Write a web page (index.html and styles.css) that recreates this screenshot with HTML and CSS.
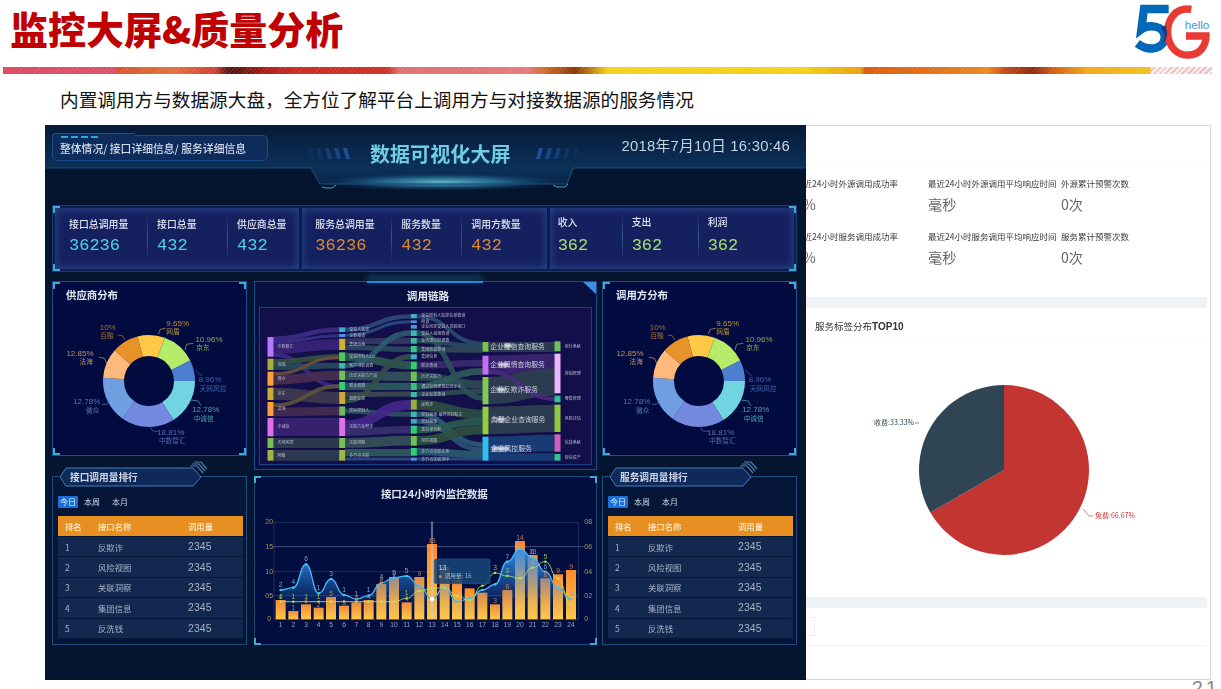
FILE: index.html
```html
<!DOCTYPE html>
<html lang="zh">
<head>
<meta charset="utf-8">
<title>监控大屏&amp;质量分析</title>
<link rel="stylesheet" href="styles.css">
</head>
<body>
<header class="slide-head">
  <h1 class="slide-title">监控大屏&amp;质量分析</h1>
  <svg class="logo" viewBox="400 0 240 180" width="80" height="60" aria-label="5G hello">
    <path d="M510 27H436L428 88C450 72 496 76 498 110C500 142 455 160 416 130" fill="none" stroke="#0068b7" stroke-width="25"/>
    <path d="M578 28C530 20 505 60 507 100C510 145 540 168 570 165C605 165 622 135 622 108H562" fill="none" stroke="#ea3a34" stroke-width="22"/>
    <path d="M486 84C496 92 499 104 497 118C495 128 490 134 484 138C492 132 505 122 505 100C505 94 503 84 500 76Z" fill="#12387f"/>
    <text x="558" y="86" class="logo-text">hello</text>
  </svg>
</header>
<div class="ribbon"></div>
<p class="subtitle">内置调用方与数据源大盘，全方位了解平台上调用方与对接数据源的服务情况</p>

<main class="stage">
  <section class="dash">
    <div class="dash-head">
      <svg class="head-deco" viewBox="0 0 761 80" width="761" height="80">
        <defs>
          <linearGradient id="headBand" x1="0" y1="0" x2="0" y2="1">
            <stop offset="0" stop-color="#061a38"/><stop offset="1" stop-color="#0b3158"/>
          </linearGradient>
          <linearGradient id="trap" x1="0" y1="0" x2="0" y2="1">
            <stop offset="0" stop-color="#0b3158"/><stop offset="1" stop-color="#082347"/>
          </linearGradient>
          <radialGradient id="headGlow">
            <stop offset="0" stop-color="#5fb6c9"/><stop offset=".5" stop-color="#2a7aa0" stop-opacity=".7"/><stop offset="1" stop-color="#0e3a66" stop-opacity="0"/>
          </radialGradient>
        </defs>
        <rect width="761" height="43" fill="url(#headBand)"/>
        <path d="M266 43H528L522 59H275Z" fill="url(#trap)"/>
        <ellipse cx="397" cy="57" rx="125" ry="9" fill="url(#headGlow)"/>
        <path d="M0 43H266L275 59H522L528 43H761" fill="none" stroke="#1a4a7d" stroke-width="1.2"/>
        <path d="M277 62L281 63H287L291 60" fill="none" stroke="#3fa5c8"/>
        <path d="M508 60L512 62H520L523 59" fill="none" stroke="#3fa5c8"/>
        <g fill="#1f4f9c">
          <path d="M262 24l3-1h3l2 11h-5z" opacity=".15"/><path d="M271 23h4l3 11h-4z" opacity=".3"/><path d="M280 23h4l3 11h-4z" opacity=".55"/><path d="M289 23h4l3 11h-4z" opacity=".75"/><path d="M298 23h4l3 11h-4z"/>
          <path d="M491 34l3-11h4l-3 11z"/><path d="M500 34l3-11h4l-3 11z" opacity=".75"/><path d="M509 34l3-11h4l-3 11z" opacity=".55"/><path d="M518 34l3-11h4l-3 11z" opacity=".3"/><path d="M527 34l3-11h4l-3 11z" opacity=".15"/>
        </g>
      </svg>
      <div class="crumb"><span class="crumb-dash"></span>整体情况/ 接口详细信息/ 服务详细信息</div>
      <div class="dash-title">数据可视化大屏</div>
      <div class="dash-date">2018年7月10日 16:30:46</div>
    </div>

    <div class="kpi-frame frame">
      <div class="kpi kpi-a">
        <div class="kpi-item"><span class="kpi-label">接口总调用量</span><span class="kpi-num cyan">36236</span></div>
        <div class="kpi-item"><span class="kpi-label">接口总量</span><span class="kpi-num cyan">432</span></div>
        <div class="kpi-item"><span class="kpi-label">供应商总量</span><span class="kpi-num cyan">432</span></div>
      </div>
      <div class="kpi kpi-b">
        <div class="kpi-item"><span class="kpi-label">服务总调用量</span><span class="kpi-num orange">36236</span></div>
        <div class="kpi-item"><span class="kpi-label">服务数量</span><span class="kpi-num orange">432</span></div>
        <div class="kpi-item"><span class="kpi-label">调用方数量</span><span class="kpi-num orange">432</span></div>
      </div>
      <div class="kpi kpi-c">
        <div class="kpi-item"><span class="kpi-label">收入</span><span class="kpi-num green">362</span></div>
        <div class="kpi-item"><span class="kpi-label">支出</span><span class="kpi-num green">362</span></div>
        <div class="kpi-item"><span class="kpi-label">利润</span><span class="kpi-num green">362</span></div>
      </div>
    </div>

    <div class="board">
      <div class="col col-left">
        <article class="panel pie-panel frame">
          <h2 class="panel-title">供应商分布</h2>
          <svg class="donut" viewBox="0 24 195 151" width="195" height="151">
            <g fill="none" stroke-width="21" transform="rotate(-90 97 100)">
              <circle cx="97" cy="100" r="35.5" pathLength="360" stroke="#ffc845" stroke-dasharray="34.6 325.4" stroke-dashoffset="14.6"/>
              <circle cx="97" cy="100" r="35.5" pathLength="360" stroke="#b4ec6a" stroke-dasharray="43.6 316.4" stroke-dashoffset="-20"/>
              <circle cx="97" cy="100" r="35.5" pathLength="360" stroke="#4c7fcf" stroke-dasharray="26.4 333.6" stroke-dashoffset="-63.6"/>
              <circle cx="97" cy="100" r="35.5" pathLength="360" stroke="#70d5e0" stroke-dasharray="58 302" stroke-dashoffset="-90"/>
              <circle cx="97" cy="100" r="35.5" pathLength="360" stroke="#7489e0" stroke-dasharray="67 293" stroke-dashoffset="-148"/>
              <circle cx="97" cy="100" r="35.5" pathLength="360" stroke="#6f9fe0" stroke-dasharray="59 301" stroke-dashoffset="-215"/>
              <circle cx="97" cy="100" r="35.5" pathLength="360" stroke="#ffb97a" stroke-dasharray="38 322" stroke-dashoffset="-274"/>
              <circle cx="97" cy="100" r="35.5" pathLength="360" stroke="#e8922a" stroke-dasharray="33.4 326.6" stroke-dashoffset="-312"/>
            </g>
            <g fill="none" stroke-width=".7">
              <polyline stroke="#c9a23e" points="106.3,53.3 108.3,48.3 113.7,47.3"/>
              <polyline stroke="#8bb656" points="133,69 134.7,63.3 141.3,62.3"/>
              <polyline stroke="#3f63a5" points="143.7,89 148,94 150,94"/>
              <polyline stroke="#5aa8b2" points="138.7,119 146.3,120 149,124.7"/>
              <polyline stroke="#5d6db5" points="98,145 100.3,149.7 106.3,150.7"/>
              <polyline stroke="#577fb5" points="58,119 54.7,123.3 49.7,123.3"/>
              <polyline stroke="#c99560" points="54.7,82.3 52.3,77.3 47,76.3"/>
              <polyline stroke="#b57420" points="73,59 70.3,54.7 65.7,54"/>
            </g>
            <g class="donut-text">
              <text x="125.7" y="44.7" fill="#b89238">9.65%</text><text x="121" y="52.7" fill="#b89238">网盾</text>
              <text x="157" y="61" fill="#84ab52">10.96%</text><text x="151" y="69" fill="#84ab52">京东</text>
              <text x="158" y="100.7" fill="#3f63a5">8.96%</text><text x="161" y="109.7" fill="#3f63a5">天网风控</text>
              <text x="153.7" y="131.3" fill="#54a0aa">12.78%</text><text x="151.7" y="139.7" fill="#54a0aa">中诚信</text>
              <text x="118.7" y="154" fill="#5a69ae">18.81%</text><text x="120.3" y="162.3" fill="#5a69ae">中数智汇</text>
              <text x="34.7" y="123.3" fill="#5278ac">12.78%</text><text x="40.7" y="131.7" fill="#5278ac">微众</text>
              <text x="28" y="75.3" fill="#c08f5e">12.85%</text><text x="34.3" y="83.3" fill="#c08f5e">法海</text>
              <text x="55.7" y="48.7" fill="#ad7020">10%</text><text x="55" y="56.7" fill="#ad7020">百融</text>
            </g>
          </svg>
        </article>
        <article class="panel rank-panel">
          <div class="rank-tab">
            <svg class="tab-shape" viewBox="0 0 150 26" width="150" height="26">
              <path d="M130 5H137L143 12M132 3H139L145 10M134 1H141L147 8" fill="none" stroke="#4f7fb0" stroke-width="1.2"/>
              <path d="M6 7H133L141 16L133 25H6L0 16Z" fill="#0f2a5a" stroke="#3f7fb8" stroke-width="1"/>
            </svg>
            <span class="tab-text">接口调用量排行</span>
          </div>
          <div class="range-tabs"><span class="range-tab is-active">今日</span><span class="range-tab">本周</span><span class="range-tab">本月</span></div>
          <div class="rank-table">
            <div class="rank-row rank-header"><span>排名</span><span>接口名称</span><span>调用量</span></div>
            <div class="rank-row"><span>1</span><span>反欺诈</span><span class="rank-val">2345</span></div>
            <div class="rank-row"><span>2</span><span>风险视图</span><span class="rank-val">2345</span></div>
            <div class="rank-row"><span>3</span><span>关联洞察</span><span class="rank-val">2345</span></div>
            <div class="rank-row"><span>4</span><span>集团信息</span><span class="rank-val">2345</span></div>
            <div class="rank-row"><span>5</span><span>反洗钱</span><span class="rank-val">2345</span></div>
          </div>
        </article>
      </div>

      <div class="col col-center">
        <article class="panel link-panel">
          <span class="link-glow"></span>
          <span class="link-corner"></span>
          <h2 class="link-title">调用链路</h2>
          <svg class="sankey" viewBox="30 100 992 468" width="331" height="156">
            <defs><filter id="smudge"><feGaussianBlur stdDeviation="3"/></filter></defs>
            <rect x="30" y="100" width="992" height="468" fill="#130f4b"/>
            <g class="flows">
              <path stroke="#3d2b85" stroke-width="14" d="M70 192C168 192 168 165 267 165"/>
              <path stroke="#38308a" stroke-width="9" d="M70 203C168 203 168 183 267 183"/>
              <path stroke="#3a2378" stroke-width="32" d="M70 222C168 222 168 209 267 209"/>
              <path stroke="#3b2a88" stroke-width="12" d="M70 240C168 240 168 335 267 335"/>
              <path stroke="#35503f" stroke-width="16" d="M70 262C168 262 168 246 267 246"/>
              <path stroke="#284a5a" stroke-width="17" d="M70 277C168 277 168 273 267 273"/>
              <path stroke="#6a4e3a" stroke-width="10" d="M70 298C168 298 168 248 267 248"/>
              <path stroke="#4a2e50" stroke-width="28" d="M70 316C168 316 168 302 267 302"/>
              <path stroke="#3f3850" stroke-width="36" d="M70 357C168 357 168 370 267 370"/>
              <path stroke="#5e5138" stroke-width="12" d="M70 392C168 392 168 335 267 335"/>
              <path stroke="#452c50" stroke-width="26" d="M70 412C168 412 168 409 267 409"/>
              <path stroke="#3b2270" stroke-width="54" d="M70 457H267"/>
              <path stroke="#2e3c50" stroke-width="30" d="M70 505H267"/>
              <path stroke="#2e3c50" stroke-width="32" d="M70 542H267"/>

              <path stroke="#2c4a7a" stroke-width="13" d="M285 165C383 165 383 125 482 125"/>
              <path stroke="#2a4a80" stroke-width="9" d="M285 182C383 182 383 141 482 141"/>
              <path stroke="#343a62" stroke-width="18" d="M285 200C383 200 383 198 482 198"/>
              <path stroke="#2a4a60" stroke-width="16" d="M285 218C383 218 383 224 482 224"/>
              <path stroke="#2c5a55" stroke-width="24" d="M285 246C383 246 383 272 482 272"/>
              <path stroke="#2c5a70" stroke-width="16" d="M285 273C383 273 383 175 482 175"/>
              <path stroke="#34505a" stroke-width="28" d="M285 302C383 302 383 305 482 305"/>
              <path stroke="#2c5a60" stroke-width="22" d="M285 335H482"/>
              <path stroke="#3a4a50" stroke-width="15" d="M285 360C383 360 383 358 482 358"/>
              <path stroke="#344e4a" stroke-width="16" d="M285 378C383 378 383 246 482 246"/>
              <path stroke="#2d5060" stroke-width="15" d="M285 409C383 409 383 419 482 419"/>
              <path stroke="#43268a" stroke-width="30" d="M285 452C383 452 383 390 482 390"/>
              <path stroke="#3a3070" stroke-width="22" d="M285 472C383 472 383 465 482 465"/>
              <path stroke="#34505a" stroke-width="29" d="M285 505C383 505 383 498 482 498"/>
              <path stroke="#305a5a" stroke-width="22" d="M285 534H482"/>
              <path stroke="#2a4a80" stroke-width="9" d="M285 553H482"/>

              <path stroke="#2c4a70" stroke-width="12" d="M500 125C598 125 598 207 697 207"/>
              <path stroke="#2a4a60" stroke-width="14" d="M500 198C598 198 598 216 697 216"/>
              <path stroke="#2e4a52" stroke-width="17" d="M500 224C598 224 598 226 697 226"/>
              <path stroke="#3a2a70" stroke-width="20" d="M500 272C598 272 598 265 697 265"/>
              <path stroke="#2c4a55" stroke-width="25" d="M500 305C598 305 598 330 697 330"/>
              <path stroke="#2c5a5a" stroke-width="20" d="M500 335C598 335 598 290 697 290"/>
              <path stroke="#2e4a52" stroke-width="15" d="M500 358C598 358 598 350 697 350"/>
              <path stroke="#2e4c40" stroke-width="30" d="M500 390C598 390 598 420 697 420"/>
              <path stroke="#2c5a70" stroke-width="15" d="M500 419C598 419 598 510 697 510"/>
              <path stroke="#2c5470" stroke-width="14" d="M500 440C598 440 598 525 697 525"/>
              <path stroke="#2a5a50" stroke-width="22" d="M500 465C598 465 598 440 697 440"/>
              <path stroke="#2e5040" stroke-width="28" d="M500 498C598 498 598 465 697 465"/>
              <path stroke="#2a5a70" stroke-width="22" d="M500 531C598 531 598 540 697 540"/>
              <path stroke="#2a4a80" stroke-width="9" d="M500 553H697"/>
              <path stroke="#2a5058" stroke-width="16" d="M500 175C598 175 598 370 697 370"/>

              <path stroke="#2d3d50" stroke-width="30" d="M715 217H913"/>
              <path stroke="#3a2470" stroke-width="57" d="M715 271C814 271 814 266 913 266"/>
              <path stroke="#2e4050" stroke-width="82" d="M715 348C814 348 814 322 913 322"/>
              <path stroke="#4a2a80" stroke-width="12" d="M715 292C814 292 814 373 913 373"/>
              <path stroke="#2e4050" stroke-width="82" d="M715 437C814 437 814 431 913 431"/>
              <path stroke="#1a3f78" stroke-width="50" d="M715 511C814 511 814 505 913 505"/>
              <path stroke="#1a3f78" stroke-width="22" d="M715 547H913"/>
            </g>
            <g class="nodes">
              <rect x="52" y="187" height="59" fill="#b57aff"/><rect x="52" y="252" height="34" fill="#aab035"/><rect x="52" y="291" height="42" fill="#ff9f3a"/><rect x="52" y="339" height="37" fill="#ccab30"/><rect x="52" y="382" height="42" fill="#ff9f3a"/><rect x="52" y="430" height="55" fill="#e070e8"/><rect x="52" y="490" height="30" fill="#7ac050"/><rect x="52" y="526" height="32" fill="#a0b840"/>
              <rect x="267" y="158" height="14" fill="#3eb0c8"/><rect x="267" y="178" height="9" fill="#4e90e8"/><rect x="267" y="192" height="34" fill="#ccb030"/><rect x="267" y="233" height="26" fill="#50c860"/><rect x="267" y="265" height="17" fill="#40b8a8"/><rect x="267" y="288" height="28" fill="#70c058"/><rect x="267" y="322" height="24" fill="#30d070"/><rect x="267" y="352" height="36" fill="#d0a830"/><rect x="267" y="395" height="28" fill="#70b858"/><rect x="267" y="430" height="54" fill="#e070e8"/><rect x="267" y="490" height="30" fill="#7ac050"/><rect x="267" y="526" height="32" fill="#a0b840"/>
              <rect x="482" y="118" height="13" fill="#40b0c0"/><rect x="482" y="137" height="8" fill="#5090e0"/><rect x="482" y="151" height="11" fill="#4a9ad8"/><rect x="482" y="167" height="17" fill="#40b8a8"/><rect x="482" y="190" height="17" fill="#40b8a0"/><rect x="482" y="214" height="19" fill="#38c888"/><rect x="482" y="239" height="15" fill="#3cb0c0"/><rect x="482" y="261" height="23" fill="#30d070"/><rect x="482" y="291" height="28" fill="#70c058"/><rect x="482" y="325" height="21" fill="#38c080"/><rect x="482" y="352" height="15" fill="#40b8a8"/><rect x="482" y="375" height="30" fill="#90b040"/><rect x="482" y="411" height="16" fill="#38b8b0"/><rect x="482" y="433" height="14" fill="#40a8c0"/><rect x="482" y="453" height="24" fill="#30d070"/><rect x="482" y="484" height="29" fill="#70c058"/><rect x="482" y="520" height="23" fill="#30d070"/><rect x="482" y="549" height="9" fill="#4a90e8"/>
              <rect x="697" y="202" height="29" fill="#80c050"/><rect x="697" y="243" height="57" fill="#c070f0"/><rect x="697" y="307" height="82" fill="#80cc50"/><rect x="697" y="396" height="83" fill="#90d040"/><rect x="697" y="486" height="72" fill="#30c0f0"/>
              <rect x="913" y="200" height="30" fill="#70c060"/><rect x="913" y="237" height="119" fill="#e8b8f8"/><rect x="913" y="363" height="20" fill="#30c090"/><rect x="913" y="390" height="82" fill="#90c840"/><rect x="913" y="479" height="52" fill="#d060c0"/><rect x="913" y="538" height="20" fill="#30c090"/>
            </g>
            <g class="sk-small">
              <text x="82" y="220">中数智汇</text><text x="82" y="273">百融</text><text x="82" y="316">微众</text><text x="82" y="361">京东</text><text x="82" y="406">法海</text><text x="82" y="461">中诚信</text><text x="82" y="509">天网风控</text><text x="82" y="546">网盾</text>
              <text x="297" y="169">受益人监控</text><text x="297" y="187">企数渠道</text><text x="297" y="213">集团派系</text><text x="297" y="250">受益所有人2.0</text><text x="297" y="278">客户书职调查</text><text x="297" y="306">历史关联方产品</text><text x="297" y="338">新企调查</text><text x="297" y="375">智能标签</text><text x="297" y="413">实际控制人</text><text x="297" y="461">关联方反欺诈</text><text x="297" y="509">关联洞察</text><text x="297" y="546">多节点关联</text>
              <text x="513" y="128">受益所有人监控名单查询</text><text x="513" y="145">商道</text><text x="513" y="161">企业风控受益人识别接口</text><text x="513" y="180">受益人销规查询</text><text x="513" y="203">反洗钱尽职调查</text><text x="513" y="228">集团族谱查询</text><text x="513" y="250">集团信息</text><text x="513" y="276">新企查询</text><text x="513" y="309">历史关联方</text><text x="513" y="339">通过信管理查职链企业</text><text x="513" y="363">企业标签查询</text><text x="513" y="393">反欺诈</text><text x="513" y="423">控制路径-最终控制股东</text><text x="513" y="444">控制路径</text><text x="513" y="469">黑名单判断</text><text x="513" y="502">风险视图</text><text x="513" y="535">多节点关联关系</text><text x="513" y="558">多节点关联排序</text>
              <text x="944" y="219">审计系统</text><text x="944" y="300">营销管理</text><text x="944" y="377">零售管理</text><text x="944" y="435">风险评估</text><text x="944" y="509">信贷系统</text><text x="944" y="552">授信资产</text>
            </g>
            <g class="sk-big">
              <text x="720" y="223">企业授信查询服务</text><text x="720" y="277">企业舆情查询服务</text><text x="720" y="351">企业反欺诈服务</text><text x="722" y="441">典型企业查询服务</text><text x="722" y="528">企业风控服务</text>
            </g>
            <g fill="#fff" filter="url(#smudge)" opacity=".75">
              <rect x="762" y="207" width="22" height="12"/><rect x="745" y="264" width="30" height="12"/><rect x="740" y="339" width="26" height="12"/><rect x="740" y="430" width="26" height="10"/><rect x="725" y="516" width="50" height="12"/>
            </g>
          </svg>
        </article>
        <article class="panel chart-panel frame">
          <svg class="bars" viewBox="12 3 1029 507" width="343" height="169">
            <defs>
              <linearGradient id="barFill" x1="0" y1="0" x2="0" y2="1"><stop offset="0" stop-color="#ff8a2a"/><stop offset="1" stop-color="#ffc94a"/></linearGradient>
              <linearGradient id="areaFill" x1="0" y1="0" x2="0" y2="1"><stop offset="0" stop-color="#2f8ff0" stop-opacity=".95"/><stop offset=".75" stop-color="#2f8ff0" stop-opacity=".1"/><stop offset="1" stop-color="#2f8ff0" stop-opacity="0"/></linearGradient>
              <marker id="dotBlue" markerUnits="userSpaceOnUse" markerWidth="12" markerHeight="12" refX="6" refY="6"><circle cx="6" cy="6" r="4" fill="#46c0f8"/></marker>
              <marker id="dotGreen" markerUnits="userSpaceOnUse" markerWidth="12" markerHeight="12" refX="6" refY="6"><circle cx="6" cy="6" r="3.5" fill="#b4ec50"/></marker>
            </defs>
            <text x="553" y="70" class="chart-title">接口24小时内监控数据</text>
            <g stroke="#33406f" stroke-width="2" fill="none">
              <path d="M72 142H985M72 290H985M72 362H985M72 433H985M72 142V433M985 142V433"/>
            </g>
            <path d="M72 215H1000" stroke="#5a6a98" stroke-width="3" stroke-dasharray="3 1" fill="none"/>
            <g fill="url(#barFill)">
              <rect x="77" y="375" width="30" height="58"/><rect x="115" y="408" width="30" height="25"/><rect x="153" y="388" width="30" height="45"/><rect x="191" y="398" width="30" height="35"/><rect x="228" y="366" width="30" height="67"/><rect x="267" y="392" width="30" height="41"/><rect x="304" y="382" width="30" height="51"/><rect x="341" y="375" width="30" height="58"/><rect x="379" y="327" width="30" height="106"/><rect x="417" y="306" width="30" height="127"/><rect x="455" y="382" width="30" height="51"/><rect x="493" y="306" width="30" height="127"/><rect x="531" y="207" width="30" height="226"/><rect x="569" y="276" width="30" height="157"/><rect x="606" y="315" width="30" height="118"/><rect x="644" y="340" width="30" height="93"/><rect x="682" y="353" width="30" height="80"/><rect x="720" y="388" width="30" height="45"/><rect x="757" y="345" width="30" height="88"/><rect x="795" y="198" width="30" height="235"/><rect x="833" y="240" width="30" height="193"/><rect x="871" y="310" width="30" height="123"/><rect x="909" y="298" width="30" height="135"/><rect x="948" y="285" width="30" height="148"/>
            </g>
            <path fill="url(#areaFill)" d="M92 345C111 345 111 338 130 338S149 268 168 268S187 355 206 355S224 312 243 312S263 360 282 360S300 372 319 372S337 362 356 362S375 324 394 324S413 308 432 308S451 303 470 303S489 332 508 332S527 372 546 372S565 335 584 335S602 380 621 380S640 370 659 370S678 345 697 345S716 328 735 328S753 260 772 260S791 222 810 222S829 248 848 248S867 290 886 290S905 338 924 338S944 372 963 372V433H92Z"/>
            <path class="line-blue" d="M92 345C111 345 111 338 130 338S149 268 168 268S187 355 206 355S224 312 243 312S263 360 282 360S300 372 319 372S337 362 356 362S375 324 394 324S413 308 432 308S451 303 470 303S489 332 508 332S527 372 546 372S565 335 584 335S602 380 621 380S640 370 659 370S678 345 697 345S716 328 735 328S753 260 772 260S791 222 810 222S829 248 848 248S867 290 886 290S905 338 924 338S944 372 963 372"/>
            <path class="line-green" d="M92 380H130H168H206H243H282H319H356H394H432C451 380 451 370 470 370S489 348 508 348S527 340 546 340S565 338 584 338S602 362 621 362S640 376 659 376S678 332 697 332S716 294 735 294S753 303 772 303S791 310 810 310S829 278 848 278S867 260 886 260S905 310 924 310S944 390 963 390"/>
            <path d="M546 140V433" stroke="#c9cfe0" stroke-width="3" fill="none"/>
            <circle cx="546" cy="372" r="7" fill="#fff"/>
            <g class="bar-vals">
              <text x="92" y="372">4</text><text x="130" y="405">1</text><text x="168" y="385">4</text><text x="206" y="395">2</text><text x="243" y="362">5</text><text x="282" y="389">3</text><text x="319" y="378">3</text><text x="356" y="372">4</text><text x="394" y="324">8</text><text x="432" y="302">9</text><text x="470" y="378">4</text><text x="508" y="302">9</text><text x="546" y="203">13</text><text x="621" y="312">9</text><text x="735" y="384">3</text><text x="772" y="341">6</text><text x="810" y="194">14</text><text x="848" y="236">13</text><text x="886" y="306">8</text><text x="924" y="294">9</text><text x="963" y="281">9</text>
            </g>
            <g class="line-vals">
              <text x="92" y="336">2</text><text x="130" y="326">4</text><text x="168" y="259">6</text><text x="206" y="346">1</text><text x="243" y="303">3</text><text x="282" y="350">1</text><text x="319" y="362">1</text><text x="356" y="352">1</text><text x="394" y="313">4</text><text x="432" y="299">5</text><text x="470" y="294">5</text><text x="508" y="323">4</text><text x="772" y="251">7</text><text x="810" y="214">8</text><text x="848" y="238">6</text><text x="886" y="281">6</text><text x="963" y="362">3</text>
            </g>
            <g class="green-vals">
              <text x="92" y="372">1</text><text x="130" y="372">1</text><text x="168" y="372">1</text><text x="206" y="372">1</text><text x="470" y="361">1</text><text x="735" y="286">3</text><text x="772" y="295">3</text><text x="810" y="302">2</text><text x="848" y="270">4</text><text x="886" y="252">5</text>
            </g>
            <g class="tooltip">
              <rect x="553" y="252" width="167" height="74" rx="6" fill="#174476" fill-opacity=".88" stroke="#225b92" stroke-width="2"/>
              <text x="566" y="284" class="tip-title">13</text>
              <circle cx="571" cy="305" r="4" fill="#ff8a2a"/>
              <text x="584" y="310" class="tip-text">调用量:</text>
              <text x="645" y="310" class="tip-text">16</text>
            </g>
            <g class="ax-left">
              <text x="46" y="148">20</text><text x="46" y="221">15</text><text x="46" y="296">10</text><text x="46" y="368">05</text><text x="52" y="439">0</text>
            </g>
            <g class="ax-right">
              <text x="1003" y="148">08</text><text x="1003" y="221">06</text><text x="1003" y="296">04</text><text x="1003" y="368">02</text><text x="1003" y="439">0</text>
            </g>
            <g class="ax-bottom">
              <text x="92" y="456">1</text><text x="130" y="456">2</text><text x="168" y="456">3</text><text x="206" y="456">4</text><text x="243" y="456">5</text><text x="282" y="456">6</text><text x="319" y="456">7</text><text x="356" y="456">8</text><text x="394" y="456">9</text><text x="432" y="456">10</text><text x="470" y="456">11</text><text x="508" y="456">12</text><text x="546" y="456">13</text><text x="584" y="456">14</text><text x="621" y="456">15</text><text x="659" y="456">16</text><text x="697" y="456">17</text><text x="735" y="456">18</text><text x="772" y="456">19</text><text x="810" y="456">20</text><text x="848" y="456">21</text><text x="886" y="456">22</text><text x="924" y="456">23</text><text x="963" y="456">24</text>
            </g>
          </svg>
        </article>
      </div>

      <div class="col col-right">
        <article class="panel pie-panel frame">
          <h2 class="panel-title">调用方分布</h2>
          <svg class="donut" viewBox="0 24 195 151" width="195" height="151">
            <g fill="none" stroke-width="21" transform="rotate(-90 97 100)">
              <circle cx="97" cy="100" r="35.5" pathLength="360" stroke="#ffc845" stroke-dasharray="34.6 325.4" stroke-dashoffset="14.6"/>
              <circle cx="97" cy="100" r="35.5" pathLength="360" stroke="#b4ec6a" stroke-dasharray="43.6 316.4" stroke-dashoffset="-20"/>
              <circle cx="97" cy="100" r="35.5" pathLength="360" stroke="#4c7fcf" stroke-dasharray="26.4 333.6" stroke-dashoffset="-63.6"/>
              <circle cx="97" cy="100" r="35.5" pathLength="360" stroke="#70d5e0" stroke-dasharray="58 302" stroke-dashoffset="-90"/>
              <circle cx="97" cy="100" r="35.5" pathLength="360" stroke="#7489e0" stroke-dasharray="67 293" stroke-dashoffset="-148"/>
              <circle cx="97" cy="100" r="35.5" pathLength="360" stroke="#6f9fe0" stroke-dasharray="59 301" stroke-dashoffset="-215"/>
              <circle cx="97" cy="100" r="35.5" pathLength="360" stroke="#ffb97a" stroke-dasharray="38 322" stroke-dashoffset="-274"/>
              <circle cx="97" cy="100" r="35.5" pathLength="360" stroke="#e8922a" stroke-dasharray="33.4 326.6" stroke-dashoffset="-312"/>
            </g>
            <g fill="none" stroke-width=".7">
              <polyline stroke="#c9a23e" points="106.3,53.3 108.3,48.3 113.7,47.3"/>
              <polyline stroke="#8bb656" points="133,69 134.7,63.3 141.3,62.3"/>
              <polyline stroke="#3f63a5" points="143.7,89 148,94 150,94"/>
              <polyline stroke="#5aa8b2" points="138.7,119 146.3,120 149,124.7"/>
              <polyline stroke="#5d6db5" points="98,145 100.3,149.7 106.3,150.7"/>
              <polyline stroke="#577fb5" points="58,119 54.7,123.3 49.7,123.3"/>
              <polyline stroke="#c99560" points="54.7,82.3 52.3,77.3 47,76.3"/>
              <polyline stroke="#b57420" points="73,59 70.3,54.7 65.7,54"/>
            </g>
            <g class="donut-text">
              <text x="125.7" y="44.7" fill="#b89238">9.65%</text><text x="121" y="52.7" fill="#b89238">网盾</text>
              <text x="157" y="61" fill="#84ab52">10.96%</text><text x="151" y="69" fill="#84ab52">京东</text>
              <text x="158" y="100.7" fill="#3f63a5">8.96%</text><text x="161" y="109.7" fill="#3f63a5">天网风控</text>
              <text x="153.7" y="131.3" fill="#54a0aa">12.78%</text><text x="151.7" y="139.7" fill="#54a0aa">中诚信</text>
              <text x="118.7" y="154" fill="#5a69ae">18.81%</text><text x="120.3" y="162.3" fill="#5a69ae">中数智汇</text>
              <text x="34.7" y="123.3" fill="#5278ac">12.78%</text><text x="40.7" y="131.7" fill="#5278ac">微众</text>
              <text x="28" y="75.3" fill="#c08f5e">12.85%</text><text x="34.3" y="83.3" fill="#c08f5e">法海</text>
              <text x="55.7" y="48.7" fill="#ad7020">10%</text><text x="55" y="56.7" fill="#ad7020">百融</text>
            </g>
          </svg>
        </article>
        <article class="panel rank-panel">
          <div class="rank-tab">
            <svg class="tab-shape" viewBox="0 0 150 26" width="150" height="26">
              <path d="M130 5H137L143 12M132 3H139L145 10M134 1H141L147 8" fill="none" stroke="#4f7fb0" stroke-width="1.2"/>
              <path d="M6 7H133L141 16L133 25H6L0 16Z" fill="#0f2a5a" stroke="#3f7fb8" stroke-width="1"/>
            </svg>
            <span class="tab-text">服务调用量排行</span>
          </div>
          <div class="range-tabs"><span class="range-tab is-active">今日</span><span class="range-tab">本周</span><span class="range-tab">本月</span></div>
          <div class="rank-table">
            <div class="rank-row rank-header"><span>排名</span><span>接口名称</span><span>调用量</span></div>
            <div class="rank-row"><span>1</span><span>反欺诈</span><span class="rank-val">2345</span></div>
            <div class="rank-row"><span>2</span><span>风险视图</span><span class="rank-val">2345</span></div>
            <div class="rank-row"><span>3</span><span>关联洞察</span><span class="rank-val">2345</span></div>
            <div class="rank-row"><span>4</span><span>集团信息</span><span class="rank-val">2345</span></div>
            <div class="rank-row"><span>5</span><span>反洗钱</span><span class="rank-val">2345</span></div>
          </div>
        </article>
      </div>
    </div>
  </section>

  <section class="sheet">
    <div class="sheet-top"></div>
    <div class="metrics">
      <div class="metric"><div class="metric-label">最近24小时外源调用成功率</div><div class="metric-value">0%</div></div>
      <div class="metric"><div class="metric-label">最近24小时外源调用平均响应时间</div><div class="metric-value">毫秒</div></div>
      <div class="metric"><div class="metric-label">外源累计预警次数</div><div class="metric-value">0次</div></div>
      <div class="metric"><div class="metric-label">最近24小时服务调用成功率</div><div class="metric-value">0%</div></div>
      <div class="metric"><div class="metric-label">最近24小时服务调用平均响应时间</div><div class="metric-value">毫秒</div></div>
      <div class="metric"><div class="metric-label">服务累计预警次数</div><div class="metric-value">0次</div></div>
    </div>
    <div class="sheet-gap"></div>
    <div class="sheet-card">
      <h3 class="card-title">服务标签分布<b>TOP10</b></h3>
      <svg class="pie" viewBox="806 343 401 254" width="401" height="254">
        <path fill="#c23531" d="M1004 385A85 85 0 1 1 930.4 512.5L1004 470Z"/>
        <path fill="#2f4554" d="M1004 385A85 85 0 0 0 930.4 512.5L1004 470Z"/>
        <path d="M919 423H915" stroke="#2f4554" stroke-width=".6" fill="none"/>
        <path d="M1083 509L1089 516H1093" stroke="#c23531" stroke-width=".6" fill="none"/>
        <text x="914" y="425" text-anchor="end" class="pie-label" fill="#2f4554">收费:33.33%</text>
        <text x="1095" y="518" class="pie-label" fill="#c23531">免费:66.67%</text>
      </svg>
    </div>
    <div class="sheet-gap"></div>
    <div class="sheet-foot"><div class="foot-row"><span class="foot-box"></span></div></div>
  </section>
</main>
<div class="page-no">21</div>
</body>
</html>
```

FILE: styles.css
```css
* { box-sizing: border-box; }
html, body { margin: 0; padding: 0; }
body {
  width: 1221px;
  height: 689px;
  overflow: hidden;
  background: #fff;
  font-family: "Liberation Sans", "Noto Sans CJK SC", sans-serif;
  position: relative;
}
h1, h2, h3, p { margin: 0; }

.slide-head {
  height: 67px;
  display: flex;
  justify-content: space-between;
  align-items: flex-start;
  padding: 0 9px 0 10px;
}
.slide-title {
  font-size: 38px;
  line-height: 56px;
  font-weight: 900;
  color: #c00000;
  font-family: "Noto Sans CJK SC", sans-serif;
}
.logo { display: block; flex: none; }
.logo-text { font: 35px "Liberation Sans", sans-serif; fill: #4a95d6; }

.ribbon {
  height: 7px;
  margin: 0 9px 0 3px;
  background:
    repeating-linear-gradient(135deg, rgba(255,255,255,.75) 0 2px, rgba(255,255,255,0) 2px 4px) right center / 61px 100% no-repeat,
    repeating-linear-gradient(135deg, rgba(255,255,255,0) 0 2px, rgba(255,255,255,.1) 2px 3px),
    linear-gradient(90deg,
      #dc4a62 0, #d9506a 112px, #d8552f 116px, #e2713d 170px, #cf4030 212px,
      #4e1410 226px, #a81b14 262px, #cc2a22 290px, #cc2f26 385px,
      #e06d6d 395px, #e47a7a 525px, #c9661d 545px, #8a3508 572px, #f4d21a 605px,
      #f4d014 800px, #e7a10c 858px, #dd5a10 862px, #e5741a 945px, #e88a20 985px,
      #d04a12 1000px, #8c2a10 1030px, #d85a14 1050px, #f0aa14 1085px, #f2c020 1146px,
      #f0c8c8 1150px, #efb8b8 1209px);
}

.subtitle {
  height: 51px;
  padding-left: 60px;
  font-size: 18.65px;
  line-height: 50px;
  font-family: "Noto Sans CJK SC", sans-serif;
  font-weight: 400;
  color: #111;
  white-space: nowrap;
}

.stage {
  display: flex;
  margin-left: 45px;
  width: 1166px;
  height: 555px;
}

/* ---------- dark dashboard ---------- */
.dash {
  width: 761px;
  height: 555px;
  flex: none;
  background: #05142f;
  padding: 0 9px 0 7px;
  filter: blur(.3px);
  font-family: "Noto Sans CJK SC", sans-serif;
}
.dash-head {
  position: relative;
  height: 80px;
  margin: 0 -9px 0 -7px;
  padding: 8px 16px 0 7px;
  display: flex;
  justify-content: space-between;
  align-items: flex-start;
}
.head-deco { position: absolute; left: 0; top: 0; }
.crumb {
  position: relative;
  width: 216px;
  height: 26px;
  margin-top: 2px;
  padding-left: 7px;
  font-size: 10.8px;
  font-weight: 500;
  line-height: 25px;
  color: #d4dcec;
  background: #0d2c5c;
  border: 1px solid #1c4a86;
  border-radius: 0 5px 5px 5px;
  white-space: nowrap;
}
.crumb::before {
  content: "";
  position: absolute;
  left: -1px;
  top: -3px;
  width: 82px;
  height: 4px;
  background: #0d2c5c;
  border: solid #1c4a86;
  border-width: 1px 0 0 1px;
  border-radius: 4px 0 0 0;
}
.crumb-dash {
  position: absolute;
  left: 8px;
  top: 0;
  width: 38px;
  height: 2px;
  background: repeating-linear-gradient(90deg, #25a9e0 0 7px, transparent 7px 10px);
}
.dash-title {
  position: relative;
  margin-top: 7px;
  margin-right: 9px;
  font-size: 20px;
  line-height: 28px;
  font-weight: 700;
  color: #6fcde6;
  letter-spacing: .1px;
}
.dash-date {
  position: relative;
  margin-top: 2px;
  font-family: "Liberation Sans", "Noto Sans CJK SC", sans-serif;
  font-size: 14.8px;
  line-height: 22px;
  letter-spacing: .25px;
  color: #c6d3e2;
  white-space: nowrap;
}

.frame { position: relative; }
.frame::before {
  content: "";
  position: absolute;
  inset: 0;
  pointer-events: none;
  z-index: 3;
  --c: #3fa9d8;
  background:
    linear-gradient(var(--c), var(--c)) 0 0 / 7px 2px no-repeat,
    linear-gradient(var(--c), var(--c)) 0 0 / 2px 7px no-repeat,
    linear-gradient(var(--c), var(--c)) 100% 0 / 7px 2px no-repeat,
    linear-gradient(var(--c), var(--c)) 100% 0 / 2px 7px no-repeat,
    linear-gradient(var(--c), var(--c)) 0 100% / 7px 2px no-repeat,
    linear-gradient(var(--c), var(--c)) 0 100% / 2px 7px no-repeat,
    linear-gradient(var(--c), var(--c)) 100% 100% / 7px 2px no-repeat,
    linear-gradient(var(--c), var(--c)) 100% 100% / 2px 7px no-repeat;
}

.kpi-frame {
  width: 745px;
  height: 67px;
  display: grid;
  grid-template-columns: repeat(3, 1fr);
  gap: 3px;
  padding: 2px;
  border: 1px solid #14406f;
  background: #0a1f4c;
}
.kpi {
  min-width: 0;
  display: grid;
  align-items: stretch;
  background: #15205f;
  box-shadow: inset 0 0 10px #2a4f93;
  padding-top: 7px;
  padding-bottom: 7px;
  color: #dde4f0;
}
.kpi-a { grid-template-columns: 78px 80px 1fr; padding-left: 14px; }
.kpi-b { grid-template-columns: 76px 70px 1fr; padding-left: 13px; }
.kpi-c { grid-template-columns: 64px 76px 1fr; padding-left: 8px; padding-top: 5px; }
.kpi-item {
  display: flex;
  flex-direction: column;
  padding-left: 10px;
  background: linear-gradient(180deg, transparent, #2f5a9c 50%, transparent) left center / 1px 100% no-repeat;
}
.kpi-item:first-child { padding-left: 0; background: none; }
.kpi-label {
  font-size: 9.9px;
  line-height: 18px;
  font-weight: 500;
  white-space: nowrap;
}
.kpi-num {
  margin-top: 3px;
  font-family: "Liberation Mono", monospace;
  font-size: 17px;
  line-height: 20px;
}
.kpi-c .kpi-num { margin-top: 5px; }
.cyan { color: #4ed4e0; }
.orange { color: #e08a2c; }
.green { color: #a6e067; }

.board {
  display: flex;
  width: 745px;
  margin-top: 9px;
}
.col { display: flex; flex-direction: column; flex: none; }
.col-left { width: 195px; margin-right: 7px; gap: 20px; }
.col-center { width: 343px; margin-right: 5px; gap: 6px; }
.col-right { width: 195px; gap: 20px; }

.panel { position: relative; }
.pie-panel {
  height: 175px;
  background: #020b40;
  border: 1px solid #1e4f8a;
}
.panel-title {
  height: 24px;
  padding: 6px 0 0 13px;
  font-size: 10.4px;
  line-height: 14px;
  font-weight: 700;
  color: #e3e8f2;
}
.donut {
  display: block;
  margin: -1px 0 0 -1px;
}
.donut-text text {
  font-size: 6.7px;
  text-anchor: middle;
  font-family: "Noto Sans CJK SC", sans-serif;
}
.donut-text text:nth-child(odd) {
  font-size: 8px;
  font-family: "Liberation Sans", sans-serif;
}

.rank-panel {
  height: 169px;
  background: #061639;
  border: 1px solid #1d4c7e;
  padding: 17px 3px 0 5px;
}
.rank-tab {
  position: absolute;
  left: 7px;
  top: -16px;
  width: 150px;
  height: 26px;
  display: flex;
  align-items: flex-end;
  padding: 0 0 1px 10px;
}
.tab-shape { position: absolute; left: 0; top: 0; }
.tab-text {
  position: relative;
  font-size: 9.7px;
  line-height: 18px;
  font-weight: 700;
  color: #cfd8e8;
}
.range-tabs { display: flex; align-items: center; gap: 12px; height: 16px; }
.range-tab {
  font-size: 8px;
  line-height: 12px;
  color: #cdd6e6;
}
.range-tab.is-active {
  width: 20px;
  text-align: center;
  margin-right: -6px;
  background: #1a6fd8;
  border-radius: 1px;
  color: #e8f1ff;
}
.rank-table { margin-top: 6px; display: flex; flex-direction: column; gap: 1px; }
.rank-row {
  display: grid;
  grid-template-columns: 33px 90px 1fr;
  padding-left: 7px;
  height: 19.4px;
  align-items: center;
  background: #12284f;
  font-size: 8.4px;
  color: #a8b3c8;
}
.rank-header {
  height: 20px;
  background: #e88f22;
  color: #fbeacd;
  font-weight: 500;
}
.rank-val { font-family: "Liberation Sans", sans-serif; font-size: 10.4px; letter-spacing: .1px; }

.link-panel {
  height: 189px;
  background: #07103f;
  border: 1px solid #1a4f8e;
  padding: 0 5px;
}
.link-glow {
  position: absolute;
  left: 112px;
  top: -1px;
  width: 116px;
  height: 2px;
  background: #2a86d8;
  box-shadow: 0 -3px 7px #2f9ad0;
}
.link-corner {
  position: absolute;
  right: 0;
  top: 0;
  width: 0;
  height: 0;
  border-style: solid;
  border-width: 0 13px 12px 0;
  border-color: transparent #3f8fe0 transparent transparent;
}
.link-title {
  height: 26px;
  padding-left: 5px;
  font-size: 10.6px;
  line-height: 28px;
  font-weight: 700;
  color: #e3e8f2;
  text-align: center;
}
.sankey { display: block; outline: 1px solid #1d3f8c; }
.flows path { fill: none; opacity: .92; }
.nodes rect { width: 18px; }
.sk-small text { font-size: 12px; fill: #b7bfcf; font-family: "Noto Sans CJK SC", sans-serif; }
.sk-big text { font-size: 20.5px; fill: #c9d0dc; font-family: "Noto Sans CJK SC", sans-serif; }

.chart-panel {
  height: 169px;
  background: #020d40;
  outline: 1px solid #1a4878;
  outline-offset: -1px;
}
.bars { display: block; }
.chart-title {
  font-size: 31.5px;
  font-weight: 700;
  fill: #dfe5ef;
  text-anchor: middle;
  font-family: "Noto Sans CJK SC", sans-serif;
}
.line-blue { fill: none; stroke: #46b4ee; stroke-width: 4; marker-start: url(#dotBlue); marker-mid: url(#dotBlue); marker-end: url(#dotBlue); }
.line-green { fill: none; stroke: #b4ec50; stroke-width: 2.5; marker-start: url(#dotGreen); marker-mid: url(#dotGreen); marker-end: url(#dotGreen); }
.bar-vals text, .line-vals text, .green-vals text, .ax-bottom text {
  font-family: "Liberation Sans", sans-serif;
  font-size: 20px;
  text-anchor: middle;
}
.bar-vals text { fill: #c27d5a; }
.line-vals text { fill: #6aa8d8; }
.green-vals text { fill: #8fc05a; }
.ax-bottom text { fill: #93a3c6; }
.ax-left text, .ax-right text { font-family: "Liberation Sans", sans-serif; font-size: 21px; fill: #b29459; }
.tip-title { font-family: "Liberation Sans", sans-serif; font-size: 21px; fill: #d6deea; }
.tip-text { font-family: "Noto Sans CJK SC", sans-serif; font-size: 17px; fill: #a9b6c9; }

/* ---------- white sheet ---------- */
.sheet {
  width: 405px;
  height: 555px;
  flex: none;
  overflow: hidden;
  background: #fff;
  border: solid #d8d8d8;
  border-width: 1px 1px 1px 0;
  padding-right: 3px;
  display: flex;
  flex-direction: column;
  filter: blur(.25px);
  font-family: "Noto Sans CJK SC", sans-serif;
}
.sheet-top { height: 38px; flex: none; border-bottom: 1px solid #f7f7f7; }
.metrics {
  height: 133px;
  flex: none;
  margin-left: -11px;
  padding-top: 12px;
  display: grid;
  grid-template-columns: 133px 133px 133px;
  grid-auto-rows: 53px;
}
.metric-label { font-size: 8.5px; line-height: 14px; color: #3a3a3a; white-space: nowrap; }
.metric-value { margin-top: 3px; font-size: 14.2px; line-height: 22px; color: #666; }
.sheet-gap { height: 11px; flex: none; background: #f0f2f5; }
.sheet-card { height: 289px; flex: none; display: flex; flex-direction: column; }
.card-title {
  height: 35px;
  flex: none;
  padding-left: 9px;
  font-size: 9.5px;
  line-height: 36px;
  font-weight: 400;
  color: #333;
  border-bottom: 1px solid #f7f7f7;
}
.card-title b { font-family: "Liberation Sans", sans-serif; font-weight: 700; font-size: 10px; }
.pie { display: block; }
.pie-label { font-size: 7px; font-family: "Noto Sans CJK SC", sans-serif; }
.sheet-foot { flex: 1; }
.foot-row { height: 38px; padding-top: 9px; border-bottom: 1px solid #f4f4f4; }
.foot-box {
  display: block;
  width: 9px;
  height: 19px;
  border: 1px solid #eee;
  border-left: 0;
}

.page-no {
  position: absolute;
  right: 1px;
  top: 676px;
  font-size: 20px;
  line-height: 24px;
  color: #888;
  letter-spacing: 3px;
}
```
